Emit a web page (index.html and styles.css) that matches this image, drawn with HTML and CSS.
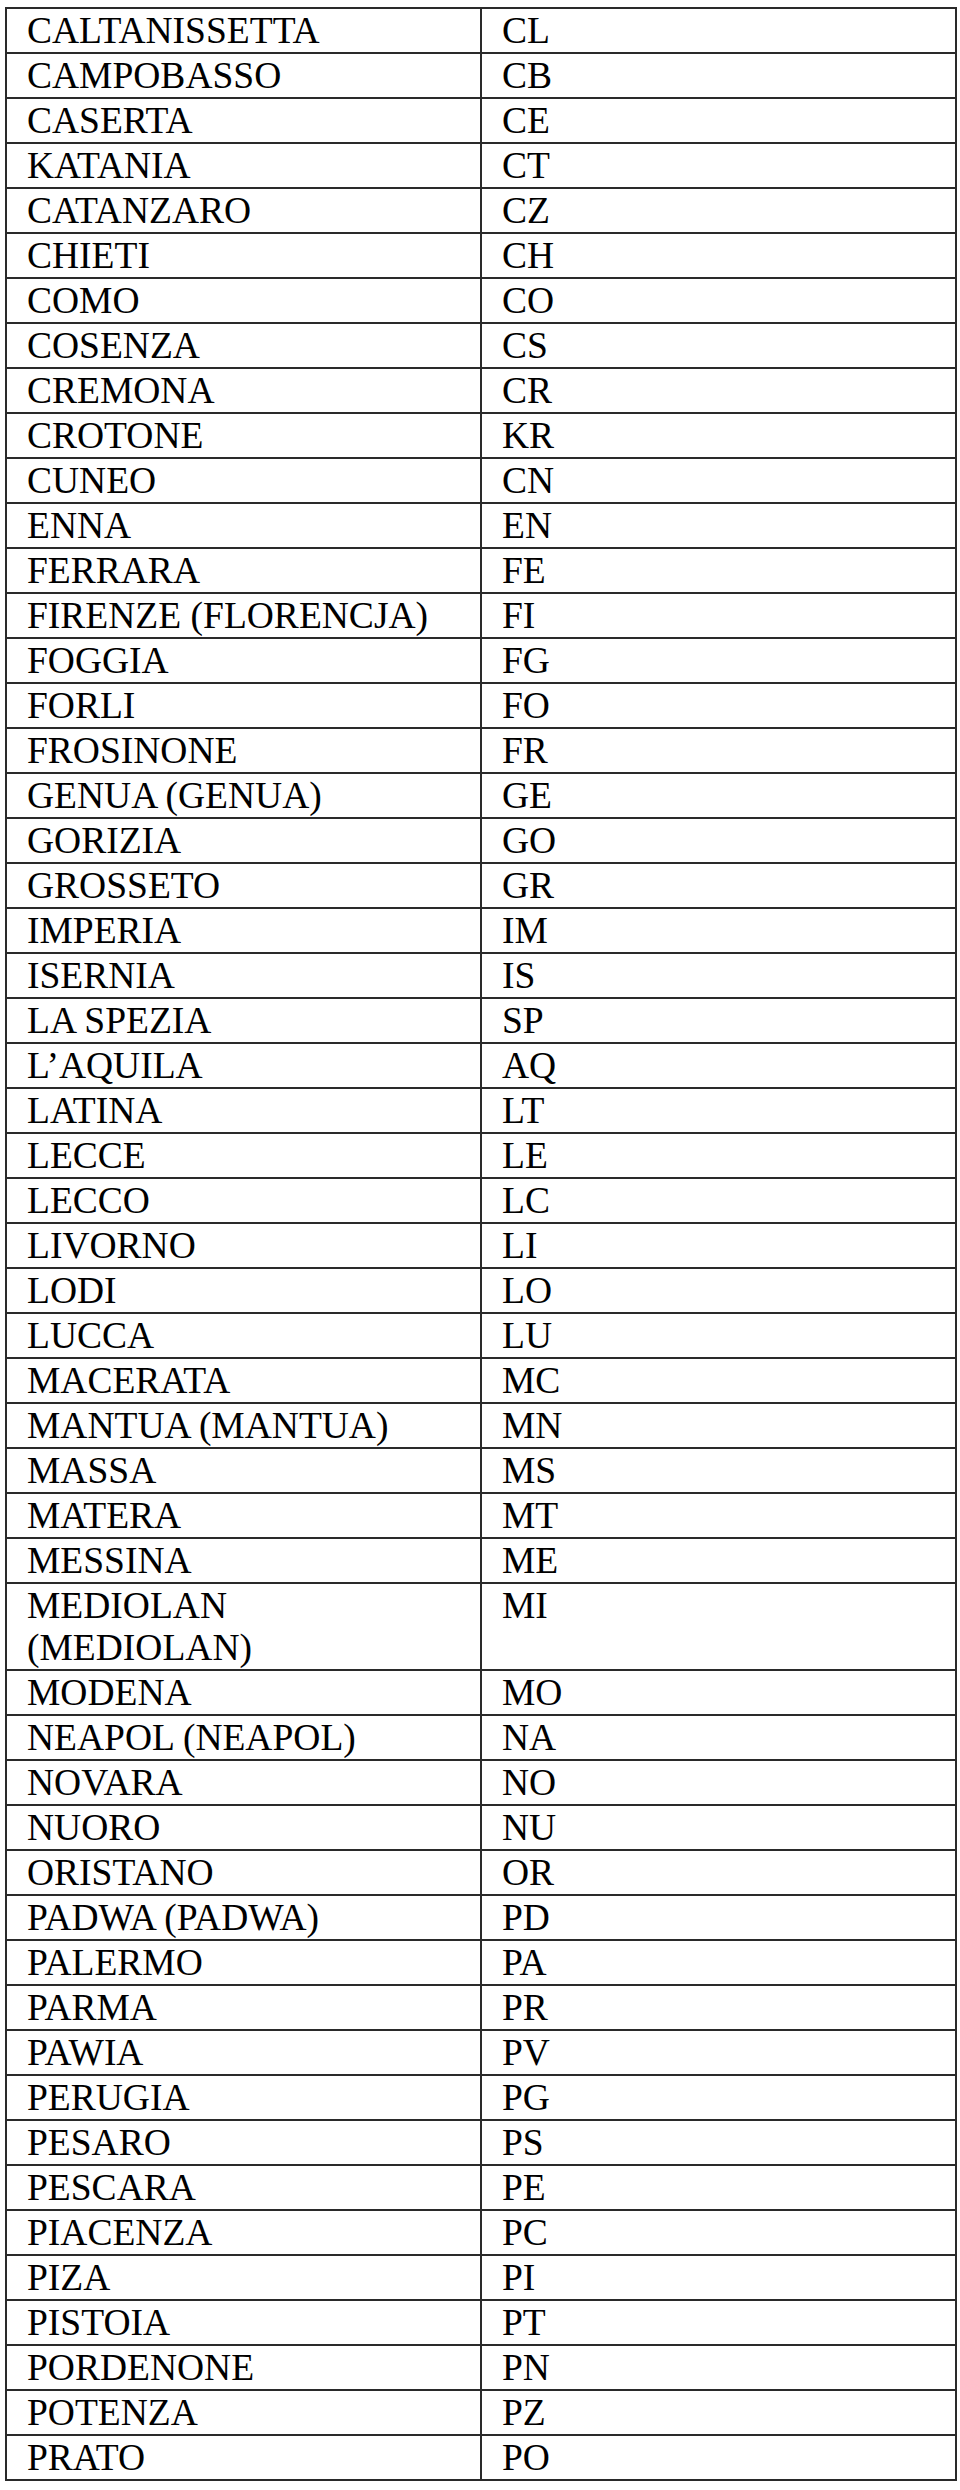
FILE: index.html
```html
<!DOCTYPE html>
<html lang="pl">
<head>
<meta charset="utf-8">
<title>Prowincje</title>
<link rel="stylesheet" href="styles.css">
</head>
<body>
<table class="prov">
<colgroup><col class="c1"><col class="c2"></colgroup>
<tbody>
<tr><td>CALTANISSETTA</td><td>CL</td></tr>
<tr><td>CAMPOBASSO</td><td>CB</td></tr>
<tr><td>CASERTA</td><td>CE</td></tr>
<tr><td>KATANIA</td><td>CT</td></tr>
<tr><td>CATANZARO</td><td>CZ</td></tr>
<tr><td>CHIETI</td><td>CH</td></tr>
<tr><td>COMO</td><td>CO</td></tr>
<tr><td>COSENZA</td><td>CS</td></tr>
<tr><td>CREMONA</td><td>CR</td></tr>
<tr><td>CROTONE</td><td>KR</td></tr>
<tr><td>CUNEO</td><td>CN</td></tr>
<tr><td>ENNA</td><td>EN</td></tr>
<tr><td>FERRARA</td><td>FE</td></tr>
<tr><td>FIRENZE (FLORENCJA)</td><td>FI</td></tr>
<tr><td>FOGGIA</td><td>FG</td></tr>
<tr><td>FORLI</td><td>FO</td></tr>
<tr><td>FROSINONE</td><td>FR</td></tr>
<tr><td>GENUA (GENUA)</td><td>GE</td></tr>
<tr><td>GORIZIA</td><td>GO</td></tr>
<tr><td>GROSSETO</td><td>GR</td></tr>
<tr><td>IMPERIA</td><td>IM</td></tr>
<tr><td>ISERNIA</td><td>IS</td></tr>
<tr><td>LA SPEZIA</td><td>SP</td></tr>
<tr><td>L’AQUILA</td><td>AQ</td></tr>
<tr><td>LATINA</td><td>LT</td></tr>
<tr><td>LECCE</td><td>LE</td></tr>
<tr><td>LECCO</td><td>LC</td></tr>
<tr><td>LIVORNO</td><td>LI</td></tr>
<tr><td>LODI</td><td>LO</td></tr>
<tr><td>LUCCA</td><td>LU</td></tr>
<tr><td>MACERATA</td><td>MC</td></tr>
<tr><td>MANTUA (MANTUA)</td><td>MN</td></tr>
<tr><td>MASSA</td><td>MS</td></tr>
<tr><td>MATERA</td><td>MT</td></tr>
<tr><td>MESSINA</td><td>ME</td></tr>
<tr><td>MEDIOLAN<br>(MEDIOLAN)</td><td>MI</td></tr>
<tr><td>MODENA</td><td>MO</td></tr>
<tr><td>NEAPOL (NEAPOL)</td><td>NA</td></tr>
<tr><td>NOVARA</td><td>NO</td></tr>
<tr><td>NUORO</td><td>NU</td></tr>
<tr><td>ORISTANO</td><td>OR</td></tr>
<tr><td>PADWA (PADWA)</td><td>PD</td></tr>
<tr><td>PALERMO</td><td>PA</td></tr>
<tr><td>PARMA</td><td>PR</td></tr>
<tr><td>PAWIA</td><td>PV</td></tr>
<tr><td>PERUGIA</td><td>PG</td></tr>
<tr><td>PESARO</td><td>PS</td></tr>
<tr><td>PESCARA</td><td>PE</td></tr>
<tr><td>PIACENZA</td><td>PC</td></tr>
<tr><td>PIZA</td><td>PI</td></tr>
<tr><td>PISTOIA</td><td>PT</td></tr>
<tr><td>PORDENONE</td><td>PN</td></tr>
<tr><td>POTENZA</td><td>PZ</td></tr>
<tr><td>PRATO</td><td>PO</td></tr>
</tbody>
</table>
</body>
</html>
```

FILE: styles.css
```css
html, body {
  margin: 0;
  padding: 0;
  background: #ffffff;
}

body {
  padding: 7px 0 0 5px;
  font-family: "Liberation Serif", "Times New Roman", serif;
  color: #000000;
}

.prov {
  border-collapse: collapse;
  table-layout: fixed;
  width: 952px;
}

.prov .c1,
.prov .c2 {
  width: 50%;
}

.prov td {
  border: 2px solid #2a2a2a;
  padding: 1px 0 0 20px;
  font-size: 37.5px;
  line-height: 42px;
  vertical-align: top;
  white-space: nowrap;
}
```
